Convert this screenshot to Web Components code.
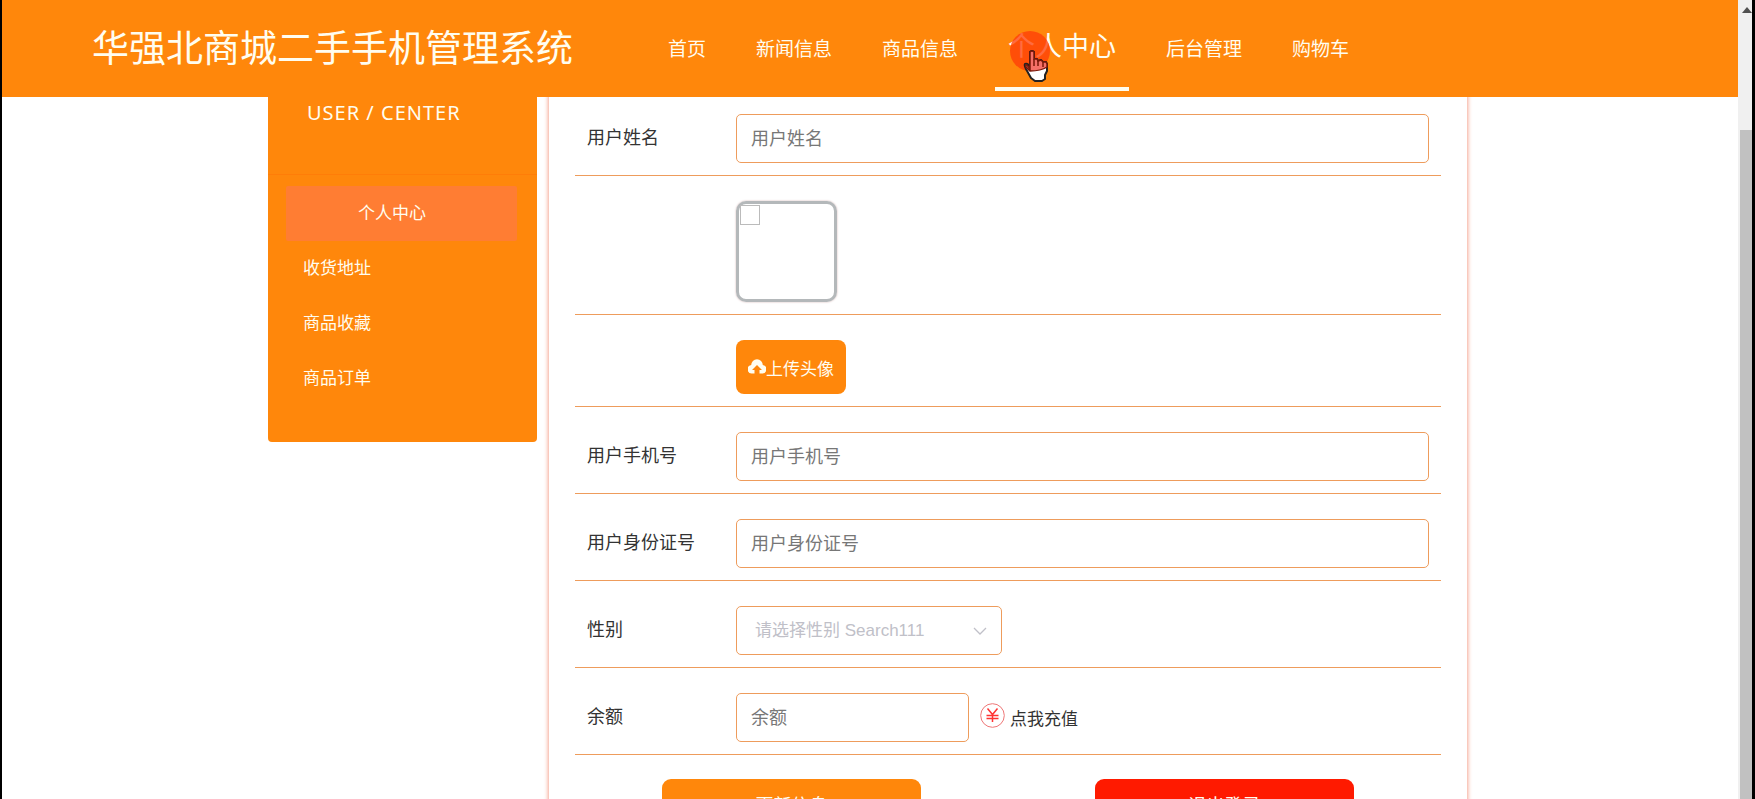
<!DOCTYPE html>
<html lang="zh-CN">
<head>
<meta charset="utf-8">
<title>华强北商城二手手机管理系统</title>
<style>
  html, body { height: 100%; margin: 0; }
  body {
    display: grid;
    grid-template-columns: minmax(0, 1fr) 14px;
    box-sizing: border-box;
    padding: 0 3px 0 2px;
    overflow: hidden;
    background: #000;
    font-family: "Liberation Sans", "Noto Sans CJK SC", sans-serif;
    color: #333;
    --brand: #ff870b;
    --line: #ee9c5c;
    --paper: #fffdf0;
  }
</style>
</head>
<body>
<shop-page>
  <shop-header slot="header" heading="华强北商城二手手机管理系统">
    <nav-item>首页</nav-item>
    <nav-item>新闻信息</nav-item>
    <nav-item>商品信息</nav-item>
    <nav-item active>个人中心<hand-pointer slot="over"></hand-pointer></nav-item>
    <nav-item>后台管理</nav-item>
    <nav-item>购物车</nav-item>
  </shop-header>
  <side-menu slot="side" heading="USER / CENTER">
    <side-item active>个人中心</side-item>
    <side-item>收货地址</side-item>
    <side-item>商品收藏</side-item>
    <side-item>商品订单</side-item>
  </side-menu>
  <profile-form></profile-form>
</shop-page>
<scroll-track></scroll-track>

<script>
function define(name, html, setup) {
  customElements.define(name, class extends HTMLElement {
    connectedCallback() {
      if (this.shadowRoot) return;
      const t = document.createElement('template');
      t.innerHTML = html;
      this.attachShadow({ mode: 'open' }).append(t.content.cloneNode(true));
      if (setup) setup(this, this.shadowRoot);
    }
  });
}

define('shop-page', `
  <style>
    :host { display: block; height: 100vh; overflow: hidden; background: #fff; }
    main {
      display: grid; grid-template-columns: 269px minmax(0, 1fr); gap: 12px; align-items: start;
      box-sizing: border-box; max-width: 1204px; margin: -8px auto 0; padding-right: 5px;
    }
  </style>
  <slot name="header"></slot>
  <main><slot name="side"></slot><slot></slot></main>`);

define('shop-header', `
  <style>
    :host { display: block; position: relative; z-index: 2; background: var(--brand); color: var(--paper); }
    header { display: flex; height: 97px; padding-left: 90px; }
    h1 { margin: 0 82px 0 0; font-size: 37px; font-weight: 400; line-height: 99px; white-space: nowrap; }
    nav { display: flex; gap: 24px; align-items: flex-start; }
  </style>
  <header><h1></h1><nav><slot></slot></nav></header>`,
  (el, root) => { root.querySelector('h1').textContent = el.getAttribute('heading'); });

define('nav-item', `
  <style>
    :host { display: block; position: relative; white-space: nowrap; }
    a { display: block; padding: 0 13px; font-size: 19px; line-height: 99px; color: inherit; text-decoration: none; }
    :host([active]) a { padding-top: 8px; font-size: 27px; line-height: 79px; border-bottom: 4px solid var(--paper); }
  </style>
  <a href="#"><slot></slot></a><slot name="over"></slot>`);

define('hand-pointer', `
  <style>
    :host { position: absolute; left: 15px; top: 31px; width: 40px; height: 52px; pointer-events: none; }
    svg { display: block; }
  </style>
  <svg width="40" height="52" viewBox="0 0 40 52" aria-hidden="true">
    <circle cx="20" cy="20" r="20" fill="#ff3c08" fill-opacity=".76"/>
    <g transform="translate(2 -1)">
      <path d="M18 22q2-2 4 0v7l3 0 1 2 3-1 2 2 3 0 1 2v7l-2 4v4l-3 2h-7l-4-3-5-9q-2-4-1-5 3-1 5 3z" fill="#fff" stroke="#222" stroke-width="2" stroke-linejoin="round"/>
      <path d="M18 39V22q2-2 4 0v7l3 0 1 2 3-1 2 2 3 0 1 2v3q-6 4-17 4l-4-4q-1-3 1-2z" fill="#f57068" stroke="#7a1708" stroke-width="1.5"/>
      <path d="M22 29v7M26 31v5M31 32v5" stroke="#7a1708" stroke-width="1.500"/>
    </g>
  </svg>`);

define('side-menu', `
  <style>
    :host { display: block; background: var(--brand); color: var(--paper); border-radius: 0 0 4px 4px; }
    h2 { margin: 0; padding: 9px 0 46px 39px; border-bottom: 1px solid #ff7d08; font: 400 20px/30px "Noto Sans", sans-serif; letter-spacing: 1px; }
    nav { padding: 11px 20px 36px 18px; }
  </style>
  <h2></h2><nav><slot></slot></nav>`,
  (el, root) => { root.querySelector('h2').textContent = el.getAttribute('heading'); });

define('side-item', `
  <style>
    :host { display: block; }
    a { display: block; padding-left: 17px; font-size: 17px; line-height: 55px; color: inherit; text-decoration: none; }
    :host([active]) a { padding-left: 72px; background: #ff7d33; border-radius: 2px; }
  </style>
  <a href="#"><slot></slot></a>`);

define('form-row', `
  <style>
    :host { display: grid; grid-template-columns: 149px minmax(0, 1fr); padding: 25px 12px 12px; border-bottom: 1px solid var(--line); }
    label { font-size: 18px; line-height: 49px; }
    .cell { display: flex; align-items: center; }
    input, select {
      box-sizing: border-box; height: 49px; margin: 0; padding: 2px 14px 0; border: 1px solid var(--line); border-radius: 5px;
      background: #fff; font: inherit; font-size: 18px; color: #333; width: 100%;
    }
    input::placeholder { color: #777; opacity: 1; }
    .short { width: 233px; }
    .pick { position: relative; width: 266px; }
    select { appearance: none; font-size: 17px; padding: 0 18px; color: #c0c0c8; }
    .pick svg { position: absolute; right: 15px; top: 19px; }
  </style>
  <label for="field"></label>
  <div class="cell"></div>`,
  (el, root) => {
    const text = el.getAttribute('label');
    const kind = el.getAttribute('kind');
    const label = root.querySelector('label');
    const cell = root.querySelector('.cell');
    if (text) label.textContent = text; else label.removeAttribute('for');
    if (kind === 'select') {
      cell.innerHTML = `<div class="pick"><select id="field"><option>${el.getAttribute('hint')}</option></select>
        <svg width="14" height="12" viewBox="0 0 14 12" aria-hidden="true"><path d="M1 3l6 6 6-6" fill="none" stroke="#c0c0c8" stroke-width="1.3"/></svg></div><slot></slot>`;
    } else if (text) {
      cell.innerHTML = `<input id="field" type="text" placeholder="${text}" class="${kind || ''}"><slot></slot>`;
    } else {
      cell.innerHTML = '<slot></slot>';
    }
  });

define('avatar-box', `
  <style>
    :host { display: block; box-sizing: border-box; width: 101px; height: 101px; padding: 1px; border: 3px solid #b4b8ba; border-radius: 10px; box-shadow: 0 0 2px #caa; }
    div { width: 18px; height: 18px; border: 1px solid #bbb; }
  </style>
  <div role="img" aria-label="头像"></div>`);

define('upload-button', `
  <style>
    :host { display: block; }
    button { display: flex; align-items: center; justify-content: center; width: 110px; height: 54px; padding: 0; border: 0; border-radius: 8px; background: var(--brand); color: var(--paper); font: inherit; font-size: 17px; white-space: nowrap; }
  </style>
  <button type="button"><svg width="18" height="18" viewBox="0 0 18 18" aria-hidden="true"><path d="M5 15.500H4.500A4.300 4.300 0 0 1 3.200 7 5.800 5.800 0 0 1 14.800 7 4.300 4.300 0 0 1 13.500 15.500H11.500V12H14L9 7 4 12H6.500V15.500z" fill="#fffdf0"/></svg>上传头像</button>`);

define('recharge-link', `
  <style>
    :host { display: block; margin-left: 11px; }
    a { display: flex; align-items: center; gap: 5px; font-size: 17px; color: inherit; text-decoration: none; }
    svg { margin-bottom: 4px; }
  </style>
  <a href="#"><svg width="25" height="25" viewBox="0 0 25 25" aria-hidden="true" fill="none" stroke="#f33"><circle cx="12.500" cy="12.500" r="11.800" stroke="#e77" stroke-width="1"/><path d="M7.500 5.500l5 6 5-6M12.500 11.500V19M6.500 12.500h12M6.500 15.500h12" stroke-width="1.500"/></svg>点我充值</a>`);

define('profile-form', `
  <style>
    :host { display: block; padding: 0 26px; background: #fff; box-shadow: 0 0 4px 1px #f5a590; }
    .actions { display: grid; grid-template-columns: 1fr 1fr; justify-items: center; padding: 24px 0; }
    .actions button { width: 60%; height: 52px; padding: 0 0 2px; border: 0; border-radius: 9px; background: var(--brand); color: var(--paper); font: inherit; font-size: 18px; }
    .actions .out { background: #ff1a00; }
  </style>
  <form>
    <form-row label="用户姓名"></form-row>
    <form-row><avatar-box></avatar-box></form-row>
    <form-row><upload-button></upload-button></form-row>
    <form-row label="用户手机号"></form-row>
    <form-row label="用户身份证号"></form-row>
    <form-row label="性别" kind="select" hint="请选择性别 Search111"></form-row>
    <form-row label="余额" kind="short"><recharge-link></recharge-link></form-row>
    <div class="actions"><button type="button">更新信息</button><button type="button" class="out">退出登录</button></div>
  </form>`);

define('scroll-track', `
  <style>
    :host { display: grid; grid-template-rows: 130px 1fr; height: 100vh; background: #f0f0f0; overflow: hidden; }
    svg { display: block; margin: 7px 0 0 4px; }
    .thumb { margin-left: 2px; background: #c1c1c1; }
  </style>
  <svg width="10" height="6" viewBox="0 0 10 6" aria-hidden="true"><path d="M0 6L5 0l5 6z" fill="#505050"/></svg>
  <div class="thumb"></div>`);
</script>
</body>
</html>
